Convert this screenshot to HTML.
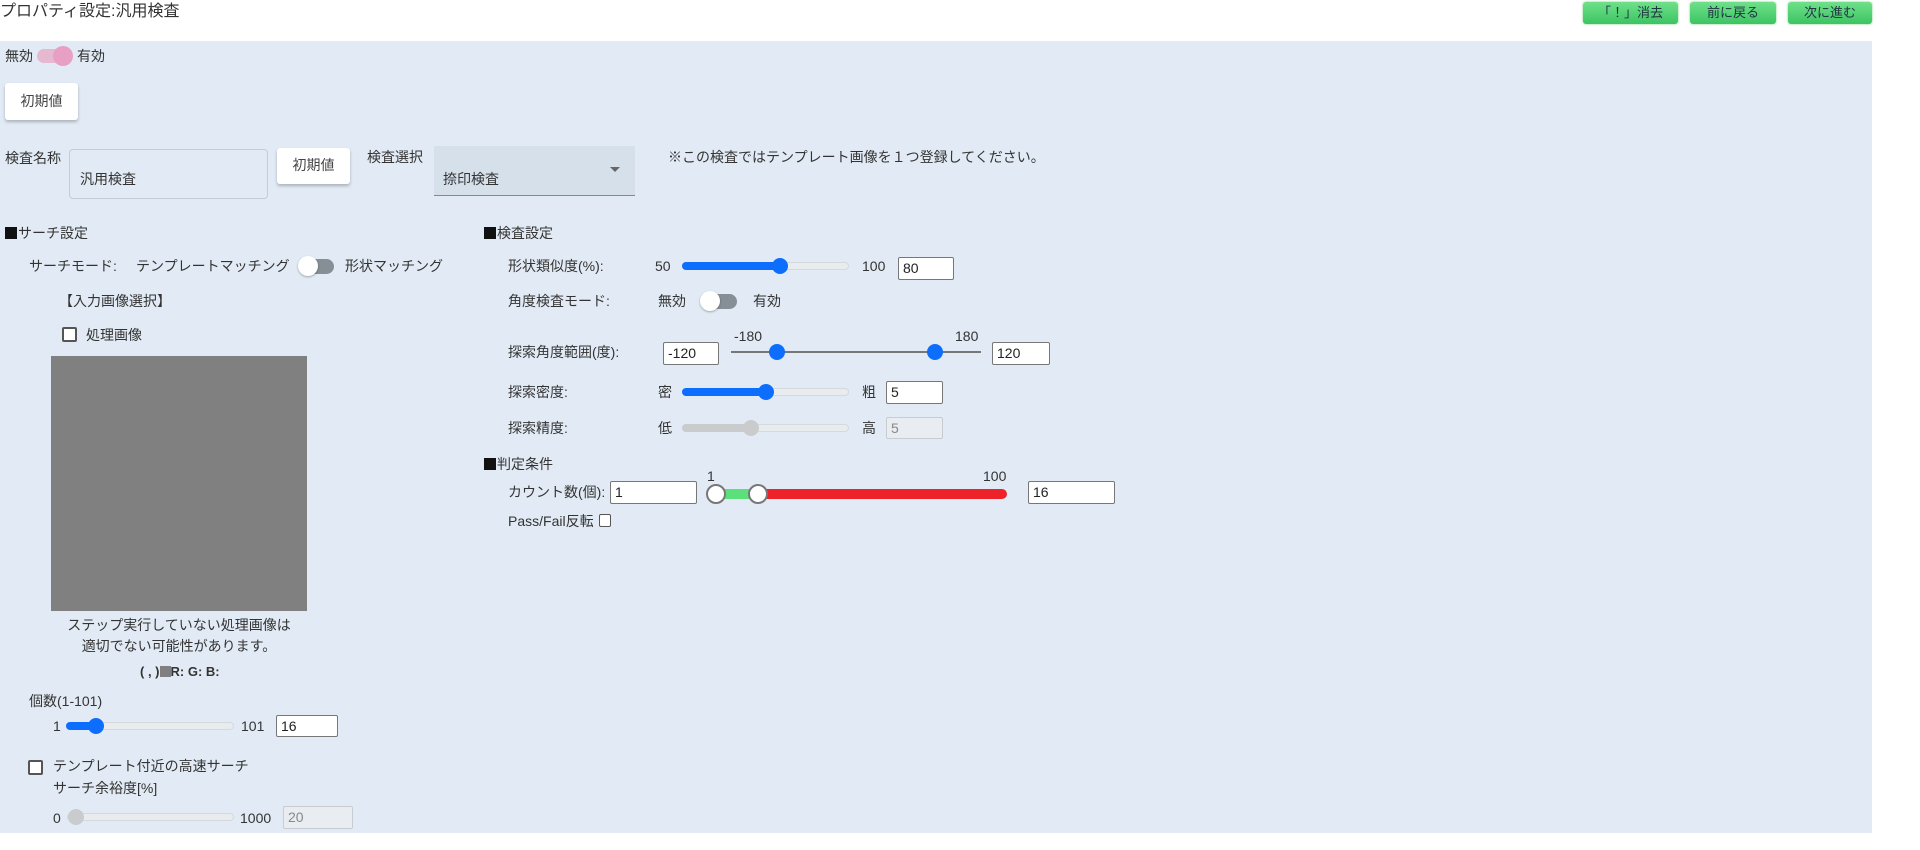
<!DOCTYPE html>
<html><head><meta charset="utf-8">
<style>
*{box-sizing:border-box;margin:0;padding:0}
body{width:1920px;height:850px;background:#fff;font-family:"Liberation Sans","Noto Sans CJK JP",sans-serif;font-size:14px;color:#333;position:relative;overflow:hidden}
.a{position:absolute;white-space:nowrap;line-height:18px}
.panel{position:absolute;left:0;top:41px;width:1872px;height:792px;background:#e2ebf5}
.gbtn{position:absolute;top:2px;height:22px;border-radius:3px;background:linear-gradient(#6fe08a,#3cc463);color:#234;font-size:13px;text-align:center;line-height:22px;box-shadow:0 0 2px #7c7}
.wbtn{position:absolute;background:#fff;border-radius:3px;box-shadow:0 2px 3px rgba(0,0,0,.25);text-align:center;font-size:14px;color:#444}
.inp{position:absolute;background:#fff;border:1px solid #777;border-radius:2px;font-size:14px;line-height:20px;padding-left:4px;color:#222}
.inp.dis{background:#e9edf2;border-color:#c8ccd0;color:#888}
.trk{position:absolute;height:8px;border-radius:4px;background:#e9ecef;border:1px solid #d6d9dc}
.fill{position:absolute;height:8px;border-radius:4px;background:#0d6efd}
.th{position:absolute;width:16px;height:16px;border-radius:50%;background:#0d6efd}
.cb{position:absolute;width:15px;height:15px;border:2px solid #555;border-radius:2px;background:#fff}
.sq{display:inline-block;width:12px;height:12px;background:#111;vertical-align:-1px;margin-right:1px}
</style></head><body>
<div class="a" style="left:0;top:3px;font-size:16px;color:#333">プロパティ設定:汎用検査</div>
<div class="gbtn" style="left:1583px;width:95px">「！」消去</div>
<div class="gbtn" style="left:1690px;width:86px">前に戻る</div>
<div class="gbtn" style="left:1788px;width:84px">次に進む</div>
<div class="panel"></div>

<div class="a" style="left:5px;top:47px">無効</div>
<div class="a" style="left:37px;top:49px;width:34px;height:14px;border-radius:7px;background:#e6b9d0"></div>
<div class="a" style="left:53px;top:46px;width:20px;height:20px;border-radius:50%;background:#e79fc4"></div>
<div class="a" style="left:77px;top:47px">有効</div>

<div class="wbtn" style="left:5px;top:83px;width:73px;height:37px;line-height:37px">初期値</div>

<div class="a" style="left:5px;top:149px">検査名称</div>
<div class="a" style="left:69px;top:149px;width:199px;height:50px;border:1px solid #c4ccd6;border-radius:4px"></div>
<div class="a" style="left:80px;top:170px">汎用検査</div>
<div class="wbtn" style="left:277px;top:148px;width:73px;height:36px;line-height:34px">初期値</div>
<div class="a" style="left:367px;top:148px">検査選択</div>
<div class="a" style="left:434px;top:146px;width:201px;height:50px;background:#d6e0eb;border-bottom:1px solid #888"></div>
<div class="a" style="left:443px;top:170px">捺印検査</div>
<div class="a" style="left:610px;top:167px;width:0;height:0;border-left:5px solid transparent;border-right:5px solid transparent;border-top:5px solid #666"></div>
<div class="a" style="left:668px;top:148px">※この検査ではテンプレート画像を１つ登録してください。</div>

<!-- left -->
<div class="a" style="left:5px;top:224px"><span class="sq"></span>サーチ設定</div>
<div class="a" style="left:29px;top:257px">サーチモード:</div>
<div class="a" style="left:136px;top:257px">テンプレートマッチング</div>
<div class="a" style="left:300px;top:259px;width:34px;height:15px;border-radius:8px;background:#868e96"></div>
<div class="a" style="left:298px;top:256px;width:20px;height:20px;border-radius:50%;background:#fff;box-shadow:0 1px 2px rgba(0,0,0,.3)"></div>
<div class="a" style="left:345px;top:257px">形状マッチング</div>
<div class="a" style="left:59px;top:292px">【入力画像選択】</div>
<div class="cb" style="left:62px;top:327px"></div>
<div class="a" style="left:86px;top:326px">処理画像</div>
<div class="a" style="left:51px;top:356px;width:256px;height:255px;background:#808080"></div>
<div class="a" style="left:30px;top:616px;width:298px;text-align:center">ステップ実行していない処理画像は</div>
<div class="a" style="left:30px;top:637px;width:298px;text-align:center">適切でない可能性があります。</div>
<div class="a" style="left:140px;top:663px;font-weight:bold;font-size:13px">( , )<span style="display:inline-block;width:11px;height:11px;background:#808080;vertical-align:-1px"></span>R: G: B:</div>
<div class="a" style="left:29px;top:692px">個数(1-101)</div>
<div class="a" style="left:53px;top:717px">1</div>
<div class="trk" style="left:66px;top:722px;width:168px"></div>
<div class="fill" style="left:66px;top:722px;width:30px"></div>
<div class="th" style="left:88px;top:718px"></div>
<div class="a" style="left:241px;top:717px">101</div>
<div class="inp" style="left:276px;top:715px;width:62px;height:22px">16</div>
<div class="cb" style="left:28px;top:760px"></div>
<div class="a" style="left:53px;top:757px">テンプレート付近の高速サーチ</div>
<div class="a" style="left:53px;top:779px">サーチ余裕度[%]</div>
<div class="a" style="left:53px;top:809px">0</div>
<div class="trk" style="left:67px;top:813px;width:167px"></div>
<div class="th" style="left:68px;top:809px;background:#c9cbcd"></div>
<div class="a" style="left:240px;top:809px">1000</div>
<div class="inp dis" style="left:283px;top:806px;width:70px;height:23px">20</div>

<!-- right -->
<div class="a" style="left:484px;top:224px"><span class="sq"></span>検査設定</div>
<div class="a" style="left:508px;top:257px">形状類似度(%):</div>
<div class="a" style="left:655px;top:257px">50</div>
<div class="trk" style="left:682px;top:262px;width:167px"></div>
<div class="fill" style="left:682px;top:262px;width:100px"></div>
<div class="th" style="left:772px;top:258px"></div>
<div class="a" style="left:862px;top:257px">100</div>
<div class="inp" style="left:898px;top:257px;width:56px;height:23px">80</div>

<div class="a" style="left:508px;top:292px">角度検査モード:</div>
<div class="a" style="left:658px;top:292px">無効</div>
<div class="a" style="left:702px;top:294px;width:35px;height:15px;border-radius:8px;background:#868e96"></div>
<div class="a" style="left:700px;top:291px;width:20px;height:20px;border-radius:50%;background:#fff;box-shadow:0 1px 2px rgba(0,0,0,.3)"></div>
<div class="a" style="left:753px;top:292px">有効</div>

<div class="a" style="left:508px;top:343px">探索角度範囲(度):</div>
<div class="inp" style="left:663px;top:342px;width:56px;height:23px">-120</div>
<div class="a" style="left:734px;top:327px">-180</div>
<div class="a" style="left:955px;top:327px">180</div>
<div class="a" style="left:731px;top:351px;width:250px;height:2px;background:#777"></div>
<div class="th" style="left:769px;top:344px"></div>
<div class="th" style="left:927px;top:344px"></div>
<div class="inp" style="left:992px;top:342px;width:58px;height:23px">120</div>

<div class="a" style="left:508px;top:383px">探索密度:</div>
<div class="a" style="left:658px;top:383px">密</div>
<div class="trk" style="left:682px;top:388px;width:167px"></div>
<div class="fill" style="left:682px;top:388px;width:86px"></div>
<div class="th" style="left:758px;top:384px"></div>
<div class="a" style="left:862px;top:383px">粗</div>
<div class="inp" style="left:886px;top:381px;width:57px;height:23px">5</div>

<div class="a" style="left:508px;top:419px">探索精度:</div>
<div class="a" style="left:658px;top:419px">低</div>
<div class="trk" style="left:682px;top:424px;width:167px"></div>
<div class="a" style="left:682px;top:424px;width:70px;height:8px;border-radius:4px;background:#c9cbcd"></div>
<div class="th" style="left:743px;top:420px;background:#c9cbcd"></div>
<div class="a" style="left:862px;top:419px">高</div>
<div class="inp dis" style="left:886px;top:417px;width:57px;height:22px">5</div>

<div class="a" style="left:484px;top:455px"><span class="sq"></span>判定条件</div>
<div class="a" style="left:508px;top:483px">カウント数(個):</div>
<div class="inp" style="left:610px;top:481px;width:87px;height:23px">1</div>
<div class="a" style="left:707px;top:467px">1</div>
<div class="a" style="left:983px;top:467px">100</div>
<div class="a" style="left:716px;top:489px;width:42px;height:10px;background:#5be07c"></div>
<div class="a" style="left:758px;top:489px;width:249px;height:10px;border-radius:0 5px 5px 0;background:#ee2229"></div>
<div class="a" style="left:706px;top:484px;width:20px;height:20px;border-radius:50%;background:#fff;border:2px solid #777"></div>
<div class="a" style="left:748px;top:484px;width:20px;height:20px;border-radius:50%;background:#fff;border:2px solid #777"></div>
<div class="inp" style="left:1028px;top:481px;width:87px;height:23px">16</div>
<div class="a" style="left:508px;top:512px">Pass/Fail反転</div>
<div class="a" style="left:599px;top:514px;width:12px;height:13px;border:1px solid #555;border-radius:2px;background:#fff"></div>
</body></html>
